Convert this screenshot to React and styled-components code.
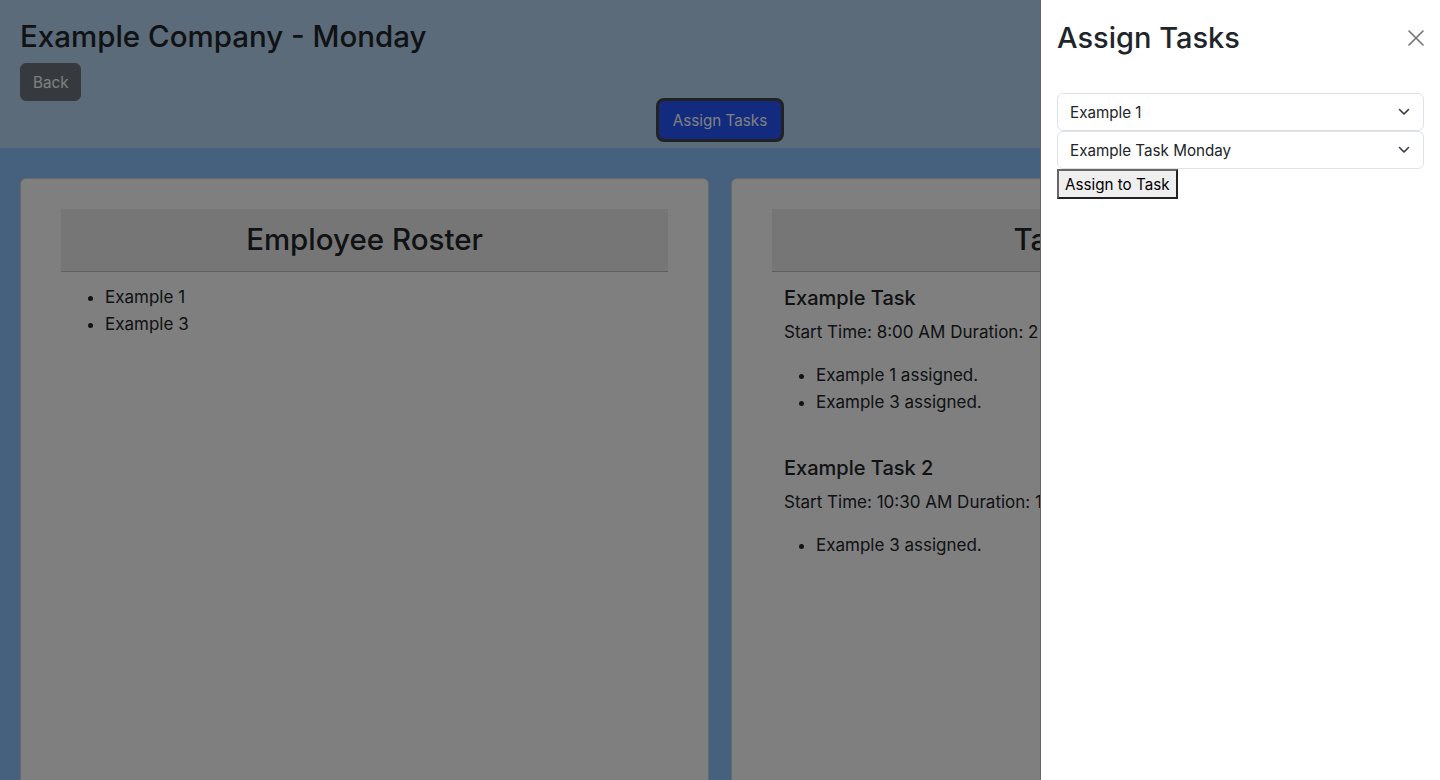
import React from 'react';
import styled, { createGlobalStyle } from 'styled-components';

const GlobalStyle = createGlobalStyle`
  html, body {
    margin: 0;
    padding: 0;
    overflow: hidden;
  }
  body {
    font-family: Inter, 'Liberation Sans', sans-serif;
    color: #212529;
    background: #8cc2fc;
  }
  *, *::before, *::after {
    box-sizing: border-box;
  }
`;

const Page = styled.div`
  min-height: 100vh;
  background: #8cc2fc;
`;

const Header = styled.header`
  display: flex;
  flex-direction: column;
  padding: 17px 20px 6px;
  background: #b6d6f4;
`;

const Title = styled.h2`
  margin: 0 0 8px;
  font-size: 29.5px;
  font-weight: 500;
  line-height: 38px;
`;

const BackButton = styled.button`
  align-self: flex-start;
  height: 38px;
  padding: 0 12px;
  font: inherit;
  font-size: 15.2px;
  color: #fff;
  background: #6c757d;
  border: 1px solid #6c757d;
  border-radius: 6px;
`;

const AssignButton = styled.button`
  align-self: center;
  margin-top: -3px;
  height: 44px;
  padding: 0 14px;
  font: inherit;
  font-size: 15.2px;
  color: #fff;
  background: #2456fe;
  border: 3px solid #444;
  border-radius: 8px;
`;

const Board = styled.main`
  display: grid;
  grid-template-columns: 1fr 1fr;
  gap: 22px;
  padding: 30px 20px;
`;

const Card = styled.section`
  min-height: 720px;
  padding: 30px 40px;
  background: #fff;
  border: 1px solid rgba(0, 0, 0, 0.175);
  border-radius: 6px;
`;

const CardHeader = styled.div`
  padding: 11px 12px 13px;
  background: rgba(0, 0, 0, 0.07);
  border-bottom: 1px solid rgba(0, 0, 0, 0.2);
  text-align: center;
`;

const CardTitle = styled.h2`
  margin: 0;
  font-size: 29.5px;
  font-weight: 500;
  line-height: 38px;
  white-space: nowrap;
`;

const CardBody = styled.div`
  padding: 12px;
  font-size: 17px;
  line-height: 27px;
`;

const List = styled.ul`
  margin: 0 0 ${({ $spaced }) => ($spaced ? '16px' : '0')};
  padding-left: 32px;
`;

const Task = styled.div`
  margin-bottom: 38px;
  white-space: nowrap;
`;

const TaskName = styled.h4`
  margin: 0 0 6px;
  font-size: 20px;
  font-weight: 500;
  line-height: 29px;
`;

const TaskInfo = styled.p`
  margin: 0 0 16px;
`;

const Backdrop = styled.div`
  position: fixed;
  inset: 0;
  background: rgba(0, 0, 0, 0.5);
  z-index: 10;
`;

const Offcanvas = styled.aside`
  position: fixed;
  top: 0;
  right: 0;
  bottom: 0;
  width: 400px;
  background: #fff;
  border-left: 1px solid rgba(0, 0, 0, 0.6);
  z-index: 20;
`;

const OffcanvasHeader = styled.div`
  display: flex;
  align-items: center;
  justify-content: space-between;
  padding: 14px 16px 16px;
`;

const OffcanvasTitle = styled.h5`
  margin: 0;
  font-size: 29px;
  font-weight: 500;
  line-height: 48px;
`;

const CloseButton = styled.button`
  display: flex;
  width: 24px;
  height: 24px;
  padding: 4px;
  margin-right: -4px;
  background: none;
  border: 0;
  opacity: 0.55;
  color: #000;
`;

const OffcanvasBody = styled.div`
  display: flex;
  flex-direction: column;
  align-items: flex-start;
  padding: 15px 16px;
`;

const SelectWrap = styled.div`
  position: relative;
  width: 100%;
`;

const Select = styled.select`
  appearance: none;
  width: 100%;
  height: 38px;
  padding: 0 36px 0 12px;
  font: inherit;
  font-size: 15.2px;
  color: #212529;
  background: #fff;
  border: 1px solid #dee2e6;
  border-radius: 6px;
`;

const Chevron = styled.svg`
  position: absolute;
  right: 12px;
  top: 13px;
  pointer-events: none;
`;

const SubmitButton = styled.button`
  height: 30px;
  padding: 0 6px;
  font: inherit;
  font-size: 15.2px;
  color: #000;
  background: #efefef;
  border: 2px solid;
  border-color: #666 #222 #222 #666;
`;

const tasks = [
  { name: 'Example Task', start: '8:00 AM', duration: '2 hours', people: ['Example 1', 'Example 3'] },
  { name: 'Example Task 2', start: '10:30 AM', duration: '1 hour', people: ['Example 3'] },
];

const Dropdown = ({ value, options }) => (
  <SelectWrap>
    <Select defaultValue={value}>
      {options.map((o) => (
        <option key={o}>{o}</option>
      ))}
    </Select>
    <Chevron width="16" height="12" viewBox="0 0 16 12" fill="none">
      <path d="M3.5 3.5 8 8l4.5-4.5" stroke="#343a40" strokeWidth="1.6" strokeLinecap="round" strokeLinejoin="round" />
    </Chevron>
  </SelectWrap>
);

const App = () => (
  <>
    <GlobalStyle />
    <Page>
      <Header>
        <Title>Example Company - Monday</Title>
        <BackButton>Back</BackButton>
        <AssignButton>Assign Tasks</AssignButton>
      </Header>
      <Board>
        <Card>
          <CardHeader>
            <CardTitle>Employee Roster</CardTitle>
          </CardHeader>
          <CardBody>
            <List>
              <li>Example 1</li>
              <li>Example 3</li>
            </List>
          </CardBody>
        </Card>
        <Card>
          <CardHeader>
            <CardTitle>Task List</CardTitle>
          </CardHeader>
          <CardBody>
            {tasks.map((t) => (
              <Task key={t.name}>
                <TaskName>{t.name}</TaskName>
                <TaskInfo>
                  Start Time: {t.start} Duration: {t.duration}
                </TaskInfo>
                <List $spaced>
                  {t.people.map((p) => (
                    <li key={p}>{p} assigned.</li>
                  ))}
                </List>
              </Task>
            ))}
          </CardBody>
        </Card>
      </Board>
    </Page>
    <Backdrop />
    <Offcanvas>
      <OffcanvasHeader>
        <OffcanvasTitle>Assign Tasks</OffcanvasTitle>
        <CloseButton aria-label="Close">
          <svg width="16" height="16" viewBox="0 0 16 16">
            <path d="M1 1l14 14M15 1 1 15" stroke="currentColor" strokeWidth="1.6" strokeLinecap="round" />
          </svg>
        </CloseButton>
      </OffcanvasHeader>
      <OffcanvasBody>
        <Dropdown value="Example 1" options={['Example 1', 'Example 3']} />
        <Dropdown value="Example Task Monday" options={['Example Task Monday', 'Example Task 2 Monday']} />
        <SubmitButton>Assign to Task</SubmitButton>
      </OffcanvasBody>
    </Offcanvas>
  </>
);

export default App;
